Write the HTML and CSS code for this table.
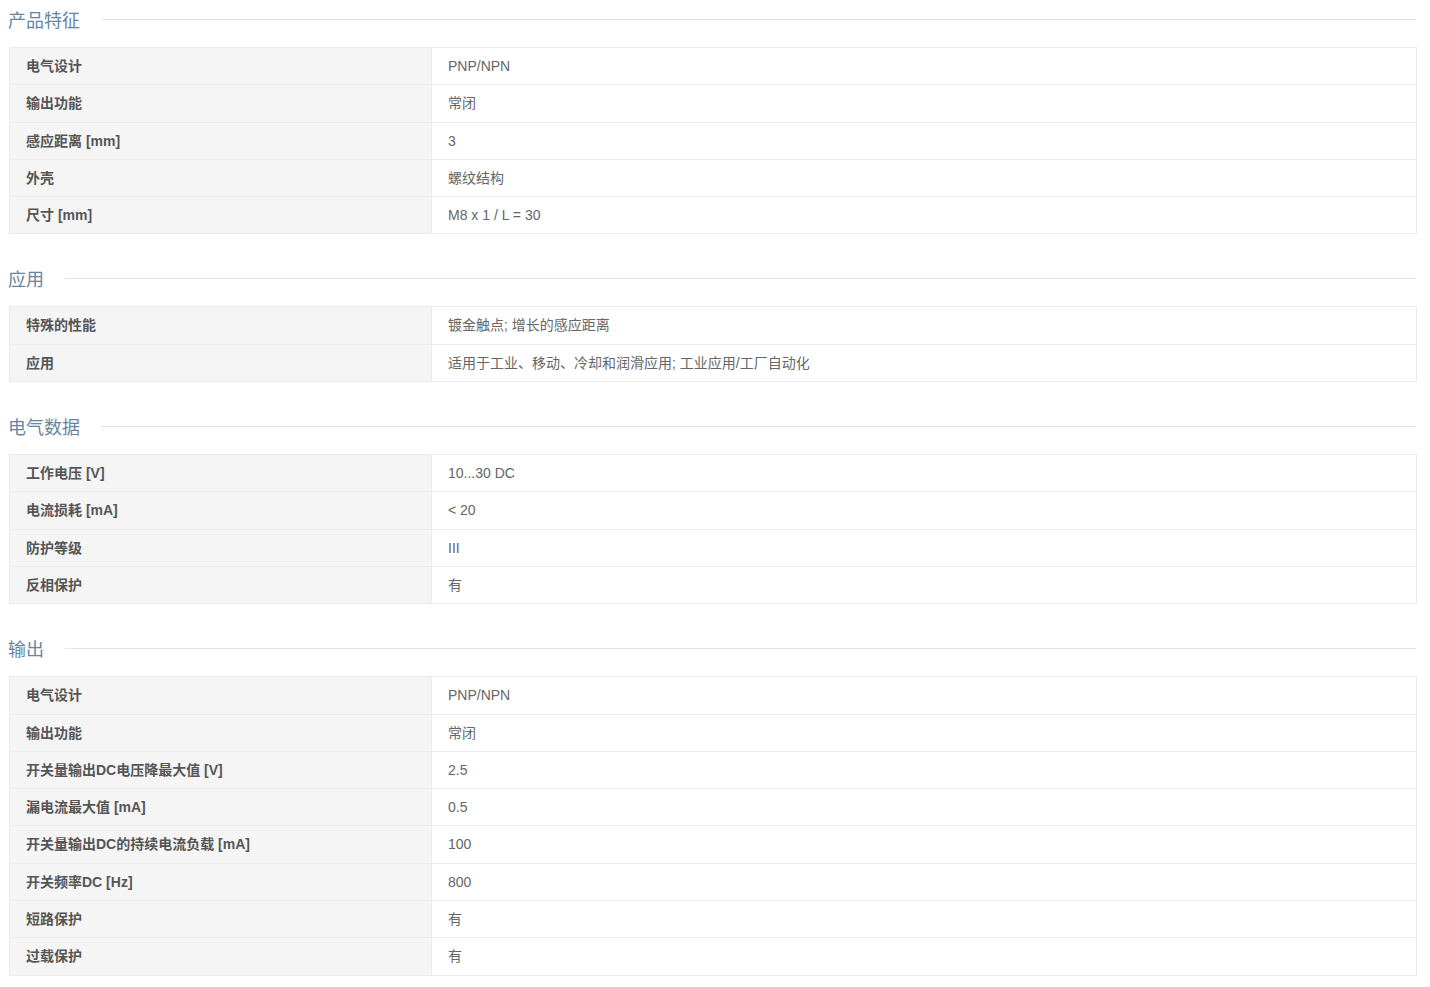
FILE: index.html
```html
<!DOCTYPE html>
<html lang="zh-CN">
<head>
<meta charset="utf-8">
<link rel="stylesheet" href="styles.css">
</head>
<body>
<div class="page">
  <section class="spec">
    <h2 class="spec-title"><span>产品特征</span></h2>
    <table class="spec-table">
      <tr><th>电气设计</th><td>PNP/NPN</td></tr>
      <tr><th>输出功能</th><td>常闭</td></tr>
      <tr><th>感应距离 [mm]</th><td>3</td></tr>
      <tr><th>外壳</th><td>螺纹结构</td></tr>
      <tr><th>尺寸 [mm]</th><td>M8 x 1 / L = 30</td></tr>
    </table>
  </section>
  <section class="spec">
    <h2 class="spec-title"><span>应用</span></h2>
    <table class="spec-table">
      <tr><th>特殊的性能</th><td>镀金触点; 增长的感应距离</td></tr>
      <tr><th>应用</th><td>适用于工业、移动、冷却和润滑应用; 工业应用/工厂自动化</td></tr>
    </table>
  </section>
  <section class="spec">
    <h2 class="spec-title"><span>电气数据</span></h2>
    <table class="spec-table">
      <tr><th>工作电压 [V]</th><td>10...30 DC</td></tr>
      <tr><th>电流损耗 [mA]</th><td>&lt; 20</td></tr>
      <tr><th>防护等级</th><td>III</td></tr>
      <tr><th>反相保护</th><td>有</td></tr>
    </table>
  </section>
  <section class="spec">
    <h2 class="spec-title"><span>输出</span></h2>
    <table class="spec-table">
      <tr><th>电气设计</th><td>PNP/NPN</td></tr>
      <tr><th>输出功能</th><td>常闭</td></tr>
      <tr><th>开关量输出DC电压降最大值 [V]</th><td>2.5</td></tr>
      <tr><th>漏电流最大值 [mA]</th><td>0.5</td></tr>
      <tr><th>开关量输出DC的持续电流负载 [mA]</th><td>100</td></tr>
      <tr><th>开关频率DC [Hz]</th><td>800</td></tr>
      <tr><th>短路保护</th><td>有</td></tr>
      <tr><th>过载保护</th><td>有</td></tr>
    </table>
  </section>
</div>
</body>
</html>
```

FILE: styles.css
```css
html, body {
  margin: 0;
  padding: 0;
  background: #fff;
}
body {
  font-family: "Liberation Sans", Arial, "Noto Sans CJK SC", sans-serif;
  font-size: 14px;
  color: #666;
}
.page {
  padding: 8px 0 0 8px;
  width: 1409px;
}
.spec {
  margin-bottom: 33px;
}
.spec-title {
  display: flex;
  align-items: center;
  gap: 21px;
  margin: 0 0 17px 0;
  height: 22px;
  font-size: 18px;
  font-weight: normal;
  color: #6685a0;
  font-family: "Liberation Sans", "Noto Sans CJK SC", sans-serif;
  padding-right: 1px;
}
.spec-title::after {
  content: "";
  flex: 1;
  height: 1px;
  background: #e4e4e4;
  margin-top: 1px;
}
.spec-table {
  width: 1408px;
  margin-left: 1px;
  border-collapse: collapse;
  table-layout: fixed;
}
.spec-table th,
.spec-table td {
  border: 1px solid #ebebeb;
  padding: 8px 16px;
  line-height: 20.3px;
  text-align: left;
  vertical-align: middle;
}
.spec-table th {
  box-sizing: border-box;
  width: 422px;
  background: #f5f5f5;
  font-weight: bold;
  color: #555;
}
.spec-table td {
  background: #fff;
  color: #666;
}
```
